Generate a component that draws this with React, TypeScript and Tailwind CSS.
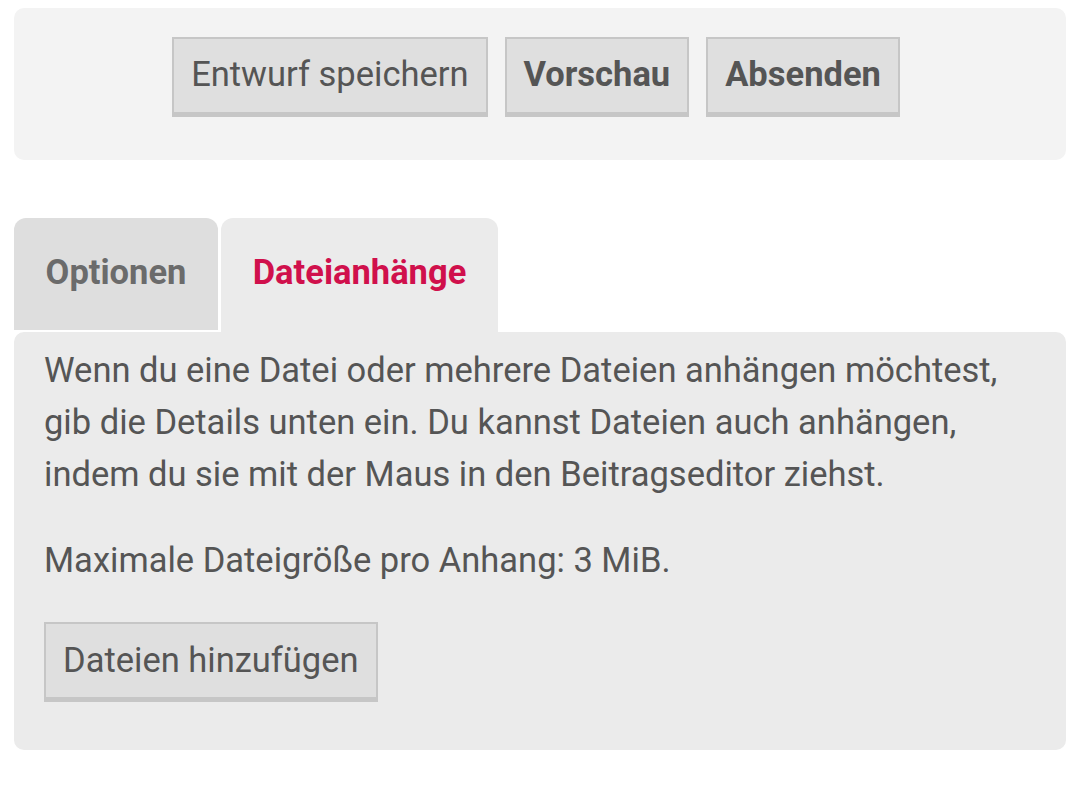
const font = { fontFamily: "Roboto, 'Liberation Sans', sans-serif" };

function GreyButton({ label, bold }: { label: string; bold?: boolean }) {
  return (
    <button
      type="button"
      className={
        bold
          ? "h-[80px] border-2 border-b-[5px] border-[#c6c6c6] bg-[#dfdfdf] px-[17px] pb-[2px] text-[34.5px] font-bold text-[#555555]"
          : "h-[80px] border-2 border-b-[5px] border-[#c6c6c6] bg-[#dfdfdf] px-[17px] pb-[2px] text-[34.5px] text-[#555555]"
      }
    >
      {label}
    </button>
  );
}

export default function App() {
  return (
    <div className="min-h-[797px] bg-white px-[14px] pt-[8px]" style={font}>
      <div className="flex h-[152px] items-center justify-center gap-[17px] rounded-[10px] bg-[#f3f3f3] pb-[14px] pr-[8px]">
        <GreyButton label="Entwurf speichern" />
        <GreyButton label="Vorschau" bold />
        <GreyButton label="Absenden" bold />
      </div>

      <div className="mt-[58px] flex items-start gap-[3px]">
        <div className="flex h-[112px] w-[204px] items-center justify-center rounded-t-[12px] bg-[#dedede] pb-[3px] text-[34.5px] font-bold text-[#6b6b6b]">
          Optionen
        </div>
        <div className="flex h-[114px] w-[277px] items-center justify-center rounded-t-[12px] bg-[#ebebeb] pb-[5px] text-[34.5px] font-bold text-[#d0104c]">
          Dateianhänge
        </div>
      </div>

      <div className="h-[418px] rounded-[10px] bg-[#ebebeb] px-[30px] pt-[12px] text-[34.5px] leading-[52px] text-[#555555]">
        <p>
          Wenn du eine Datei oder mehrere Dateien anhängen möchtest,
          <br />
          gib die Details unten ein. Du kannst Dateien auch anhängen,
          <br />
          indem du sie mit der Maus in den Beitragseditor ziehst.
        </p>
        <p className="mt-[34px]">Maximale Dateigröße pro Anhang: 3 MiB.</p>
        <div className="mt-[36px]">
          <GreyButton label="Dateien hinzufügen" />
        </div>
      </div>
    </div>
  );
}
